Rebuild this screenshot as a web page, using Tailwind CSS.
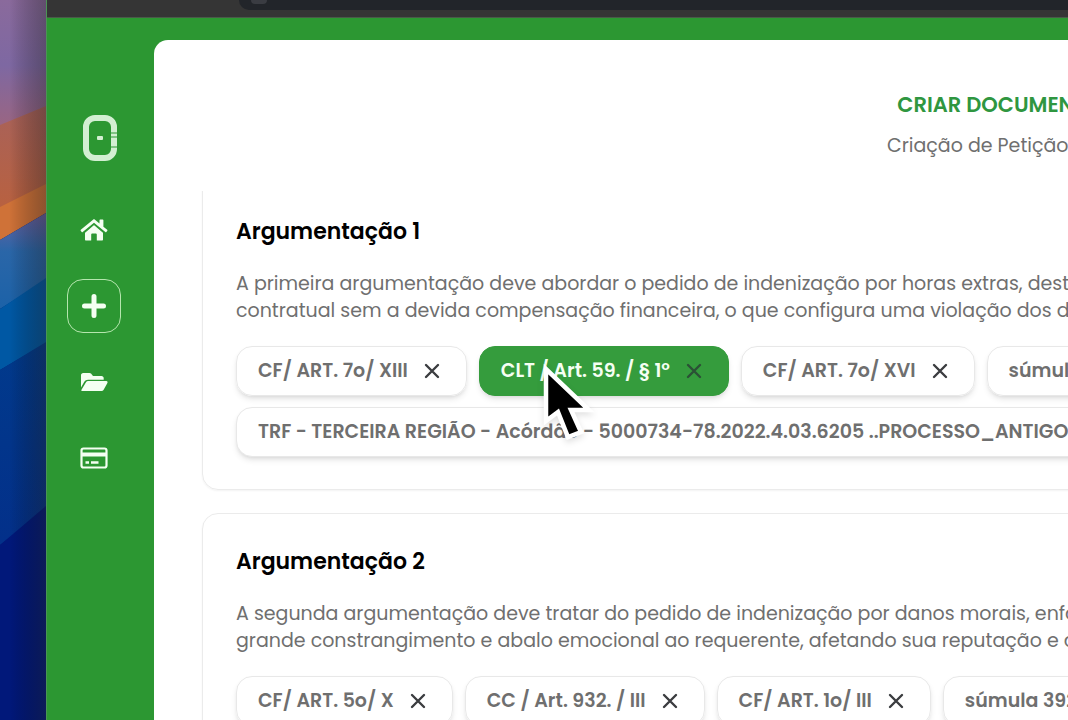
<!DOCTYPE html>
<html lang="pt-BR">
<head>
    <meta charset="UTF-8">
    <meta name="viewport" content="width=device-width, initial-scale=1.0">
    <title>Criar Documento</title>
    <script src="https://cdn.jsdelivr.net/npm/@tailwindcss/browser@4"></script>
</head>
<body class="h-screen overflow-hidden flex bg-[#01196b] font-['Poppins','Inter',sans-serif] text-[#6f6f6f]">

    <!-- Papel de parede -->
    <div class="w-[46px] shrink-0 h-full">
        <svg class="w-full h-full block" viewBox="0 0 46 720" preserveAspectRatio="none">
            <defs>
                <linearGradient id="roxo" x1="0" y1="0" x2="0" y2="1"><stop offset="0" stop-color="#8a6a9c"/><stop offset="0.5" stop-color="#7e68a2"/><stop offset="1" stop-color="#9c6580"/></linearGradient>
                <linearGradient id="laranja" x1="0" y1="0" x2="0" y2="1"><stop offset="0" stop-color="#a8625a"/><stop offset="1" stop-color="#b9613f"/></linearGradient>
                <linearGradient id="azul" x1="0" y1="0" x2="0" y2="1"><stop offset="0" stop-color="#6a60a0"/><stop offset="0.4" stop-color="#2a66a8"/><stop offset="1" stop-color="#1c62a8"/></linearGradient>
                <linearGradient id="fundo" x1="0" y1="0" x2="0" y2="1"><stop offset="0" stop-color="#013a8c"/><stop offset="1" stop-color="#03308a"/></linearGradient>
                <linearGradient id="sombra"><stop offset="0.2" stop-color="#000" stop-opacity="0"/><stop offset="1" stop-color="#202020" stop-opacity="0.38"/></linearGradient>
            </defs>
            <rect width="46" height="130" fill="url(#roxo)"/>
            <path d="M0 125L46 106V190L0 212Z" fill="url(#laranja)"/>
            <path d="M0 207L46 184V213L0 240Z" fill="#cf7238"/>
            <path d="M0 240L46 213V280L0 309Z" fill="url(#azul)"/>
            <path d="M0 309L46 278V343L0 370Z" fill="#0058a4"/>
            <path d="M0 370L46 342V510L0 545Z" fill="url(#fundo)"/>
            <path d="M0 545L46 506V720H0Z" fill="#01187a"/>
            <rect width="46" height="720" fill="url(#sombra)"/>
        </svg>
    </div>

    <!-- Janela do navegador -->
    <div class="flex-1 min-w-0 flex flex-col border-l border-[#4c9455]">
        <div class="h-[18px] shrink-0 bg-[#353535] pl-[192px] border-b border-[#4a5a49]">
            <div class="h-[10px] bg-[#22252a] rounded-bl-2xl pl-3">
                <div class="w-4 h-1 rounded-b-full bg-[#3a3c42]"></div>
            </div>
        </div>

        <div class="flex-1 min-h-0 flex bg-[#2c9732]">

            <!-- Menu lateral -->
            <aside class="w-[107px] shrink-0 pt-[97px]">
                <svg class="w-[34px] h-[46px] ml-9" viewBox="0 0 34 46" fill="none">
                    <rect x="3" y="3" width="28" height="40" rx="9" stroke="#d3efd2" stroke-width="6"/>
                    <path d="M27.500 18h7M27.500 22h7M27.500 32h7" stroke="#2c9732" stroke-width="1.200"/>
                    <rect x="14" y="21" width="6" height="4" rx="1" fill="#d3efd2"/>
                </svg>
                <nav class="mt-[42px] ml-5 flex flex-col gap-[22px] text-[#f4fff2]">
                    <a href="#" aria-label="Início" class="size-[54px] flex items-center justify-center">
                        <svg class="w-7 h-6" viewBox="0 0 28 24" fill="currentColor">
                            <path d="M14 6.600L5 14v7.600c0 .6.4 1 1 1h5.200v-6.100c0-.5.4-.9.900-.9h3.800c.5 0 .9.400.9.900v6.100H22c.6 0 1-.4 1-1V14Z"/>
                            <path d="M13 1.700c.6-.5 1.400-.5 2 0l4.500 3.700V2.200c0-.4.300-.7.700-.7h2.500c.4 0 .7.300.7.700v6.500l3.800 3.100c.3.300.4.700.1 1l-1 1.200c-.3.300-.7.400-1 .1L14 4.800 2.700 14.100c-.3.300-.7.200-1-.1l-1-1.200c-.3-.3-.2-.7.100-1Z"/>
                            <path d="M3.500 15.300L14 6.200l10.500 9.100" fill="none" stroke="#2c9732" stroke-width="1.200"/>
                        </svg>
                    </a>
                    <a href="#" aria-label="Criar" class="size-[54px] flex items-center justify-center rounded-2xl border border-[#b5e6ae]">
                        <svg class="size-6" viewBox="0 0 24 24" stroke="currentColor" stroke-width="5" stroke-linecap="round"><path d="M12 2.500v19M2.500 12h19"/></svg>
                    </a>
                    <a href="#" aria-label="Pastas" class="size-[54px] flex items-center justify-center">
                        <svg class="w-7 h-5" viewBox="0 0 28 20" fill="currentColor">
                            <path d="M1 15.500V3.200C1 2 1.900 1 3.200 1h6.300c.6 0 1.100.2 1.500.6L13 4h8.500c1.300 0 2.200 1 2.200 2.200v1.600H8c-1.500 0-2.900.8-3.700 2Z"/>
                            <path d="M1.500 17.700l4.500-7.400c.5-.7 1.200-1.200 2.100-1.200h18.300c.9 0 1.500 1 1 1.800L23.500 18c-.4.700-1.100 1.100-1.900 1.100H2.300c-.8 0-1.200-.8-.8-1.400Z"/>
                        </svg>
                    </a>
                    <a href="#" aria-label="Pagamentos" class="size-[54px] flex items-center justify-center">
                        <svg class="w-7 h-[22px]" viewBox="0 0 28 22" fill="none" stroke="currentColor">
                            <rect x="1.500" y="1.500" width="25" height="19" rx="2" stroke-width="2.200"/>
                            <path d="M2 7.500h24" stroke-width="4"/>
                            <path d="M3 4.200h22" stroke="#2c9732" stroke-width="1.500"/>
                            <path d="M5.500 15.500h3.500M11 15.500h7.500" stroke-width="2.600"/>
                        </svg>
                    </a>
                </nav>
            </aside>

            <!-- Conteúdo -->
            <main class="mt-[22px] w-[1692px] shrink-0 bg-white rounded-tl-[14px] flex flex-col">
                <header class="h-[151px] shrink-0 pt-[51px] text-center">
                    <h1 class="text-[21px] leading-7 font-semibold text-[#2f9640]">CRIAR DOCUMENTO</h1>
                    <p class="mt-[13px] text-[19px] leading-7">Criação de Petição Civil</p>
                </header>

                <div class="flex-1 min-h-0 overflow-hidden px-12 whitespace-nowrap">
                    <section class="-mt-6 border border-[#ebebeb] rounded-2xl shadow-xs px-[33px] pt-[50px] pb-8">
                        <h2 class="text-[22px] leading-7 font-semibold text-black">Argumentação 1</h2>
                        <p class="mt-6 text-[19px] leading-[27px]">A primeira argumentação deve abordar o pedido de indenização por horas extras, destacando<br>contratual sem a devida compensação financeira, o que configura uma violação dos direitos</p>
                        <ul class="mt-[22px] flex gap-3 text-[19px] leading-7 font-semibold">
                            <li class="h-[50px] pl-[21px] pr-[26px] flex items-center gap-4 rounded-2xl border border-[#e8e8e8] shadow-md">
                                <span>CF/ ART. 7o/ XIII</span>
                                <button type="button" aria-label="Remover"><svg class="size-4 block" viewBox="0 0 16 16" stroke="#3b3d40" stroke-width="2.400" stroke-linecap="round"><path d="M2 2l12 12M14 2L2 14"/></svg></button>
                            </li>
                            <li class="h-[50px] pl-[21px] pr-[26px] flex items-center gap-4 rounded-2xl border border-[#359c3d] bg-[#359c3d] text-[#f5fff3] shadow-md">
                                <span>CLT / Art. 59. / § 1º</span>
                                <button type="button" aria-label="Remover"><svg class="size-4 block" viewBox="0 0 16 16" stroke="#2b5136" stroke-width="2.400" stroke-linecap="round"><path d="M2 2l12 12M14 2L2 14"/></svg></button>
                            </li>
                            <li class="h-[50px] pl-[21px] pr-[26px] flex items-center gap-4 rounded-2xl border border-[#e8e8e8] shadow-md">
                                <span>CF/ ART. 7o/ XVI</span>
                                <button type="button" aria-label="Remover"><svg class="size-4 block" viewBox="0 0 16 16" stroke="#3b3d40" stroke-width="2.400" stroke-linecap="round"><path d="M2 2l12 12M14 2L2 14"/></svg></button>
                            </li>
                            <li class="h-[50px] pl-[21px] pr-[26px] flex items-center gap-4 rounded-2xl border border-[#e8e8e8] shadow-md">
                                <span>súmula 264</span>
                            </li>
                        </ul>
                        <ul class="mt-[11px] flex text-[19px] leading-7 font-semibold">
                            <li class="h-[50px] pl-[21px] pr-[26px] flex items-center rounded-2xl border border-[#e8e8e8] shadow-md bg-white">
                                <span>TRF - TERCEIRA REGIÃO - Acórdão - 5000734-78.2022.4.03.6205 ..PROCESSO_ANTIGO:</span>
                            </li>
                        </ul>
                    </section>

                    <section class="mt-[23px] border border-[#ebebeb] rounded-2xl shadow-xs px-[33px] pt-[34px] pb-8">
                        <h2 class="text-[22px] leading-7 font-semibold text-black">Argumentação 2</h2>
                        <p class="mt-6 text-[19px] leading-[27px]">A segunda argumentação deve tratar do pedido de indenização por danos morais, enfatizando<br>grande constrangimento e abalo emocional ao requerente, afetando sua reputação e dignidade</p>
                        <ul class="mt-[22px] flex gap-3 text-[19px] leading-7 font-semibold">
                            <li class="h-[50px] pl-[21px] pr-[26px] flex items-center gap-4 rounded-2xl border border-[#e8e8e8] shadow-md">
                                <span>CF/ ART. 5o/ X</span>
                                <button type="button" aria-label="Remover"><svg class="size-4 block" viewBox="0 0 16 16" stroke="#3b3d40" stroke-width="2.400" stroke-linecap="round"><path d="M2 2l12 12M14 2L2 14"/></svg></button>
                            </li>
                            <li class="h-[50px] pl-[21px] pr-[26px] flex items-center gap-4 rounded-2xl border border-[#e8e8e8] shadow-md">
                                <span>CC / Art. 932. / III</span>
                                <button type="button" aria-label="Remover"><svg class="size-4 block" viewBox="0 0 16 16" stroke="#3b3d40" stroke-width="2.400" stroke-linecap="round"><path d="M2 2l12 12M14 2L2 14"/></svg></button>
                            </li>
                            <li class="h-[50px] pl-[21px] pr-[26px] flex items-center gap-4 rounded-2xl border border-[#e8e8e8] shadow-md">
                                <span>CF/ ART. 1o/ III</span>
                                <button type="button" aria-label="Remover"><svg class="size-4 block" viewBox="0 0 16 16" stroke="#3b3d40" stroke-width="2.400" stroke-linecap="round"><path d="M2 2l12 12M14 2L2 14"/></svg></button>
                            </li>
                            <li class="h-[50px] pl-[21px] pr-[26px] flex items-center gap-4 rounded-2xl border border-[#e8e8e8] shadow-md">
                                <span>súmula 392</span>
                            </li>
                        </ul>
                    </section>
                </div>
            </main>
        </div>
    </div>

    <!-- Cursor -->
    <svg class="absolute left-[540px] top-[356px] w-[60px] h-[90px] pointer-events-none drop-shadow-md" viewBox="0 0 60 90">
        <path d="M6 13V65L18 56L28 81L41 76L31 54H49Z" fill="#000" stroke="#fff" stroke-width="4.500"/>
    </svg>

</body>
</html>
